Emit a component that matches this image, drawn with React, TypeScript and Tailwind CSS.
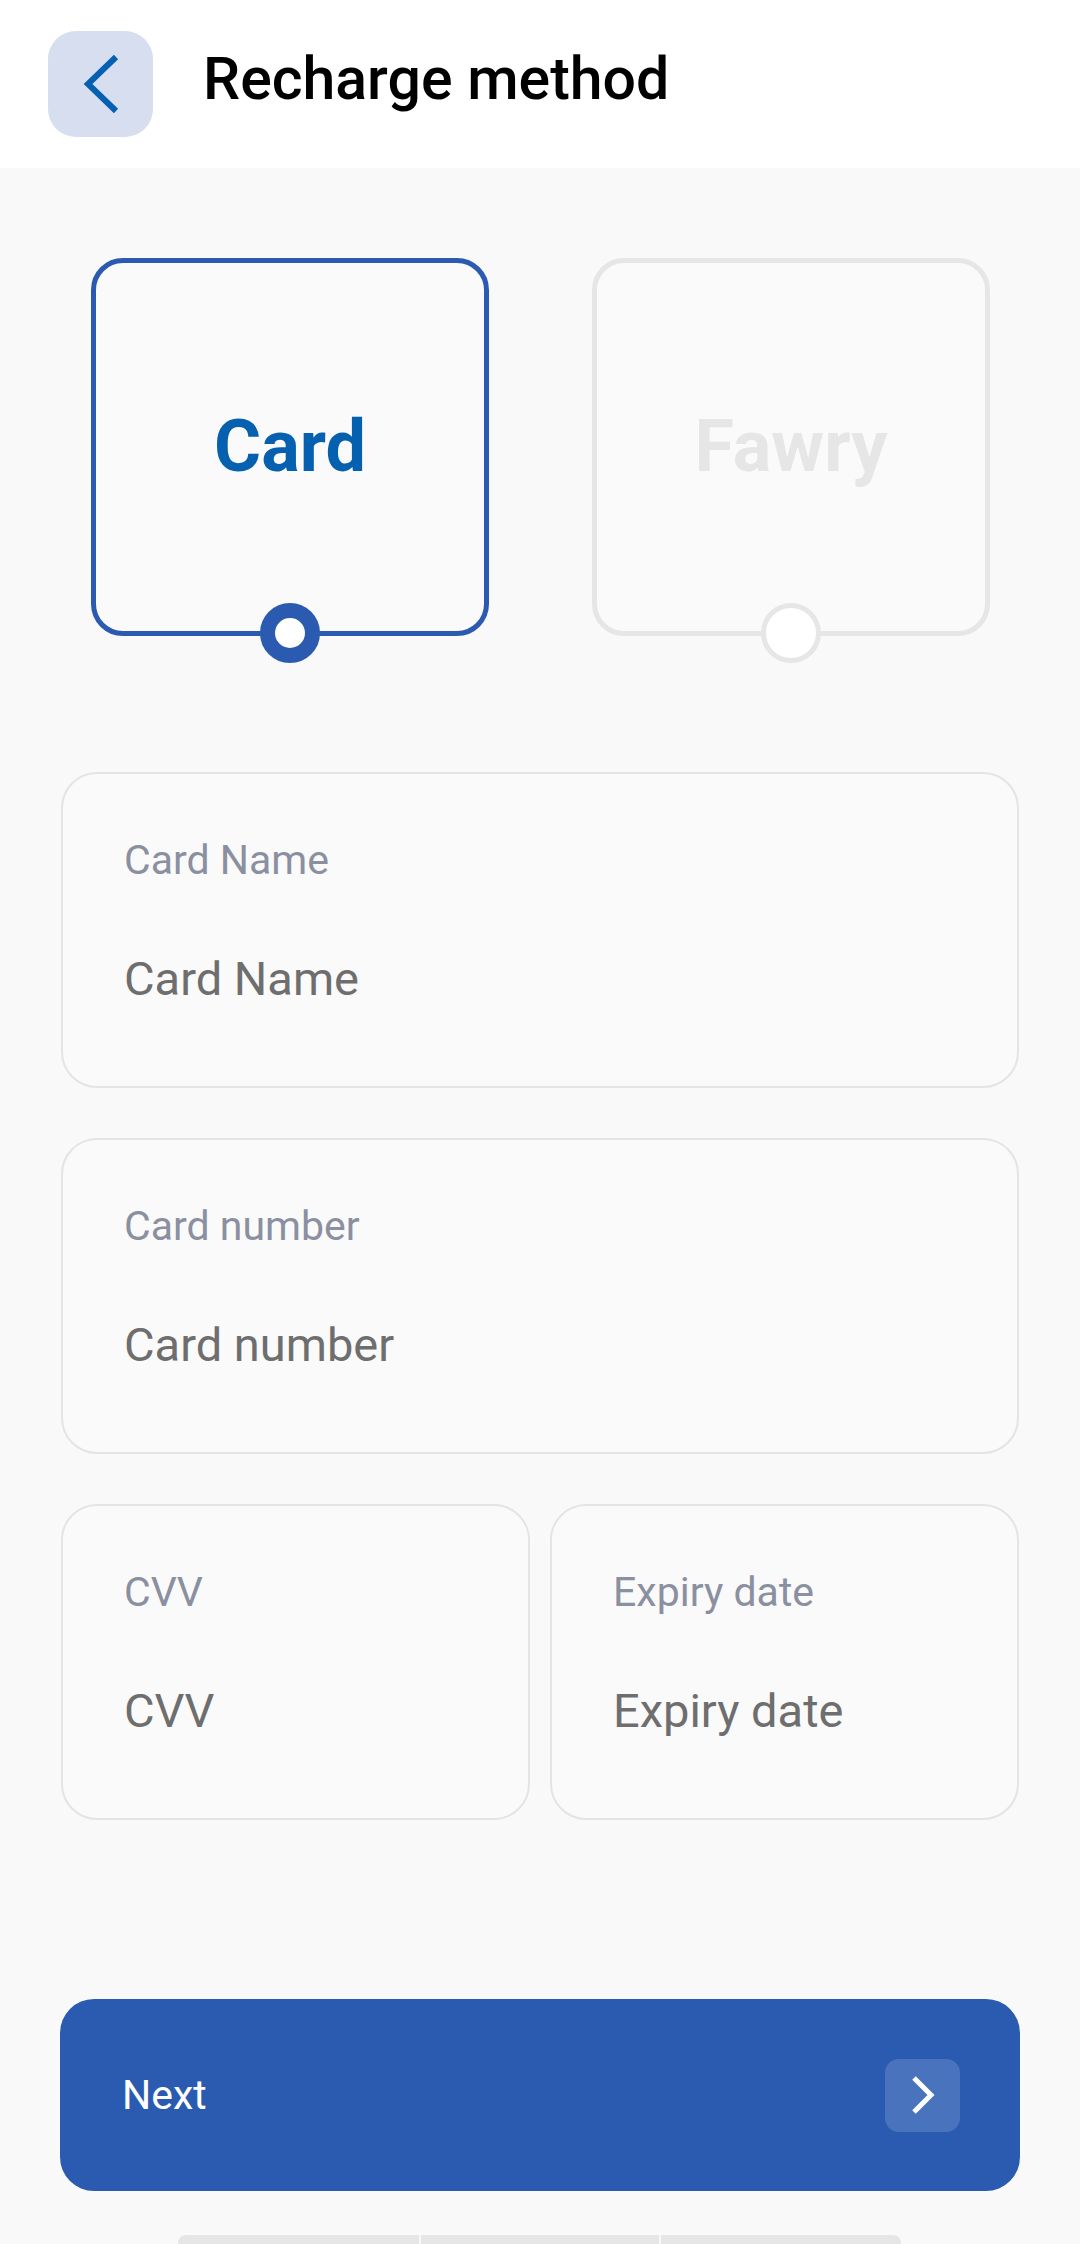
import type { ReactNode } from 'react';

interface FieldProps {
  label: string;
  placeholder: string;
  className?: string;
}

function Field({ label, placeholder, className = '' }: FieldProps) {
  return (
    <div
      className={`h-[316px] rounded-[36px] border-2 border-[#e4e4e4] bg-[#fafafa] pl-[61px] pt-[62px] ${className}`}
    >
      <div className="text-[41px] leading-[48px] text-[#8b90a0]">{label}</div>
      <div className="mt-[67px] text-[47px] leading-[56px] text-[#6e6e6e]">{placeholder}</div>
    </div>
  );
}

interface MethodTileProps {
  selected?: boolean;
  children: ReactNode;
}

function MethodTile({ selected = false, children }: MethodTileProps) {
  return (
    <div
      className={`relative flex h-[378px] w-[398px] items-center justify-center rounded-[32px] border-[5px] bg-[#fafafa] ${
        selected ? 'border-[#2a5bb1]' : 'border-[#e6e6e6]'
      }`}
    >
      <span
        className={`text-[72px] font-bold leading-none ${
          selected ? 'text-[#0561b0]' : 'text-[#e6e6e6]'
        }`}
      >
        {children}
      </span>
      <span
        className={`absolute bottom-[-32px] left-1/2 h-[60px] w-[60px] -translate-x-1/2 rounded-full bg-white ${
          selected ? 'border-[15px] border-[#2a5bb1]' : 'border-[5px] border-[#e6e6e6]'
        }`}
      />
    </div>
  );
}

export default function App() {
  return (
    <div className="flex h-[2244px] w-[1080px] flex-col overflow-hidden bg-[#f9f9f9] font-[Roboto,sans-serif]">
      <header className="flex h-[168px] shrink-0 items-center gap-[50px] bg-white pl-[48px]">
        <button className="flex h-[106px] w-[105px] items-center justify-center rounded-[28px] bg-[#d6deef]">
          <svg width="36" height="60" viewBox="0 0 36 60" fill="none">
            <polyline
              points="33,3 5,30 33,57"
              stroke="#0560b2"
              strokeWidth="6"
              strokeLinecap="butt"
              strokeLinejoin="miter"
            />
          </svg>
        </button>
        <h1 className="pb-[12px] text-[59px] font-medium leading-none text-black">Recharge method</h1>
      </header>

      <div className="flex gap-[103px] pl-[91px] pt-[90px]">
        <MethodTile selected>Card</MethodTile>
        <MethodTile>Fawry</MethodTile>
      </div>

      <div className="mt-[136px] flex flex-col gap-[50px] px-[61px]">
        <Field label="Card Name" placeholder="Card Name" />
        <Field label="Card number" placeholder="Card number" />
        <div className="flex gap-[20px]">
          <Field label="CVV" placeholder="CVV" className="flex-1" />
          <Field label="Expiry date" placeholder="Expiry date" className="flex-1" />
        </div>
      </div>

      <div className="mt-[179px] px-[60px]">
        <button className="flex h-[192px] w-full items-center justify-between rounded-[34px] bg-[#2a5bb1] pl-[62px] pr-[60px]">
          <span className="text-[41px] leading-none text-white">Next</span>
          <span className="flex h-[73px] w-[75px] items-center justify-center rounded-[14px] bg-white/15">
            <svg width="24" height="38" viewBox="0 0 24 38" fill="none">
              <polyline points="3,2 20,19 3,36" stroke="white" strokeWidth="5" />
            </svg>
          </span>
        </button>
      </div>

      <div className="mt-[44px] flex gap-[2px] pl-[178px]">
        <div className="h-[20px] w-[241px] rounded-tl-[8px] bg-[#e6e6e6]" />
        <div className="h-[20px] w-[238px] bg-[#e6e6e6]" />
        <div className="h-[20px] w-[240px] rounded-tr-[8px] bg-[#e6e6e6]" />
      </div>
    </div>
  );
}
